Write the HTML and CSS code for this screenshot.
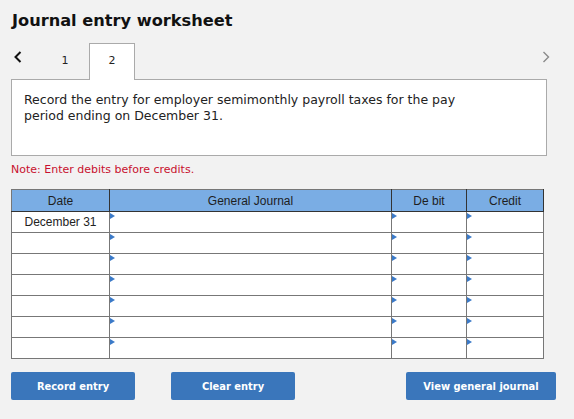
FILE: index.html
```html
<!DOCTYPE html>
<html>
<head>
<meta charset="utf-8">
<link rel="stylesheet" href="styles.css">
</head>
<body>
<div class="page">
  <h1 class="title">Journal entry worksheet</h1>
  <div class="tabs">
    <span class="nav prev"><svg width="10" height="12" viewBox="0 0 10 12"><path d="M7.5 1 L2.5 6 L7.5 11" fill="none" stroke="#111" stroke-width="2"/></svg></span>
    <span class="tab">1</span>
    <span class="tab active">2</span>
    <span class="nav next"><svg width="10" height="12" viewBox="0 0 10 12"><path d="M2.5 1 L7.5 6 L2.5 11" fill="none" stroke="#8a8a8a" stroke-width="1.4"/></svg></span>
  </div>
  <div class="question">Record the entry for employer semimonthly payroll taxes for the pay period ending on December 31.</div>
  <p class="note">Note: Enter debits before credits.</p>
  <table class="journal">
    <colgroup><col class="c-date"><col class="c-gj"><col class="c-dr"><col class="c-cr"></colgroup>
    <thead>
      <tr><th>Date</th><th>General Journal</th><th>De bit</th><th>Credit</th></tr>
    </thead>
    <tbody>
      <tr><td class="date">December 31</td><td class="in"></td><td class="in"></td><td class="in"></td></tr>
      <tr><td class="date"></td><td class="in"></td><td class="in"></td><td class="in"></td></tr>
      <tr><td class="date"></td><td class="in"></td><td class="in"></td><td class="in"></td></tr>
      <tr><td class="date"></td><td class="in"></td><td class="in"></td><td class="in"></td></tr>
      <tr><td class="date"></td><td class="in"></td><td class="in"></td><td class="in"></td></tr>
      <tr><td class="date"></td><td class="in"></td><td class="in"></td><td class="in"></td></tr>
      <tr><td class="date"></td><td class="in"></td><td class="in"></td><td class="in"></td></tr>
    </tbody>
  </table>
  <div class="buttons">
    <button class="btn btn-record">Record entry</button>
    <button class="btn btn-clear">Clear entry</button>
    <button class="btn btn-view">View general journal</button>
  </div>
</div>
</body>
</html>
```
FILE: styles.css
```css
html, body {
  margin: 0;
  padding: 0;
  background: #f2f2f2;
}
.page {
  width: 574px;
  height: 419px;
  padding: 0 0 0 11px;
  box-sizing: border-box;
  font-family: "DejaVu Sans", Verdana, sans-serif;
  color: #222;
}
.title {
  margin: 0;
  padding-top: 11px;
  font-size: 16.2px;
  line-height: 20px;
  font-weight: bold;
  color: #111;
  padding-left: 1px;
}
.tabs {
  display: flex;
  align-items: flex-end;
  height: 37px;
  margin-top: 12px;
  margin-bottom: -1px;
  position: relative;
  width: 536px;
}
.nav {
  display: flex;
  align-items: center;
  align-self: flex-start;
  height: 28px;
}
.prev {
  width: 30px;
  padding-left: 2px;
  box-sizing: border-box;
}
.next {
  margin-left: auto;
  width: 12px;
  margin-right: -6px;
}
.tab {
  font-size: 11px;
  width: 48px;
  height: 36px;
  display: flex;
  align-items: center;
  justify-content: center;
  box-sizing: border-box;
  padding-bottom: 4px;
}
.tab.active {
  width: 46px;
  height: 37px;
  background: #fff;
  border: 1px solid #aaa;
  border-bottom: none;
  position: relative;
  z-index: 1;
}
.question {
  width: 536px;
  height: 77px;
  box-sizing: border-box;
  background: #fff;
  border: 1px solid #aaa;
  padding: 12px 70px 0 12px;
  font-size: 12.5px;
  line-height: 16px;
  color: #222;
}
.note {
  margin: 7px 0 0 0;
  font-size: 11px;
  line-height: 14px;
  color: #c8102e;
}
.journal {
  margin-top: 12px;
  border-collapse: collapse;
  table-layout: fixed;
  width: 532px;
  font-family: "Liberation Sans", Arial, sans-serif;
  font-size: 12px;
  background: #fff;
}
.c-date { width: 98px; }
.c-gj { width: 282px; }
.c-dr { width: 75px; }
.c-cr { width: 77px; }
.journal th {
  background: #7aade4;
  color: #1e1e1e;
  font-weight: normal;
  height: 21px;
  padding: 0;
  border: 1px solid #333;
  font-size: 12px;
}
.journal thead tr th:first-child { border-left-color: #777; }
.journal thead tr th { border-top-color: #777; }
.journal td {
  border: 1px solid #777;
  height: 20px;
  padding: 0;
}
.journal tbody tr:first-child td { border-top: 1px solid #333; }
.journal td.date {
  text-align: center;
  color: #222;
}
.journal td.in {
  position: relative;
}
.journal td.in::before {
  content: "";
  position: absolute;
  left: 0;
  top: 1px;
  border-left: 5px solid #3b7ac8;
  border-top: 3px solid transparent;
  border-bottom: 3px solid transparent;
}
.buttons {
  display: flex;
  gap: 36px;
  margin-top: 13px;
  width: 545px;
}
.btn {
  height: 28px;
  width: 124px;
  background: #3a76bb;
  color: #fff;
  border: none;
  border-radius: 2px;
  font-family: "DejaVu Sans Condensed", "DejaVu Sans", Tahoma, sans-serif;
  font-weight: bold;
  font-size: 11px;
  padding: 0;
}
.btn-view {
  width: 150px;
  margin-left: auto;
}
```
